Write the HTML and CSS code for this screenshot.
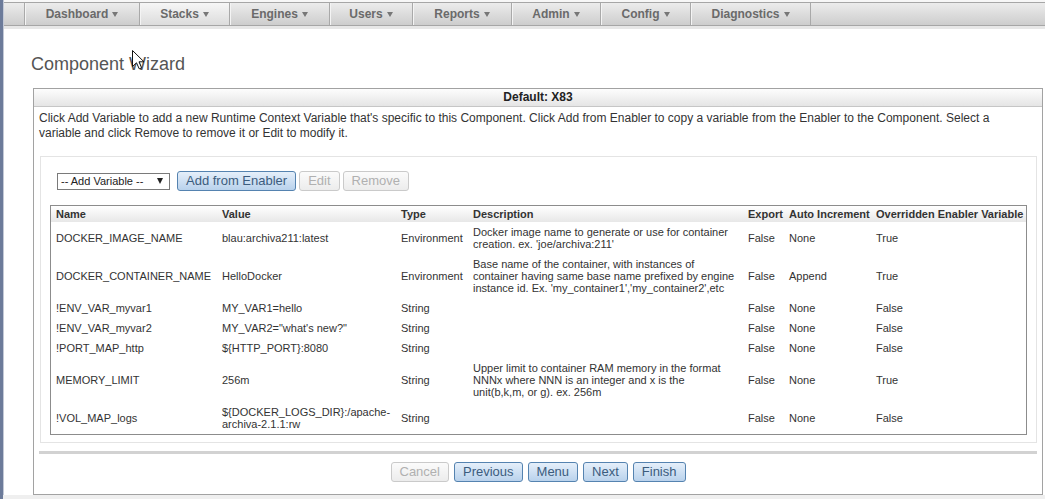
FILE: index.html
```html
<!DOCTYPE html>
<html lang="en">
<head>
<meta charset="utf-8">
<title>Component Wizard</title>
<link rel="stylesheet" href="styles.css">
</head>
<body>
<div class="frame">
  <div class="page">
    <div class="navwrap">
      <nav class="nav">
        <a class="nav-item i-dash">Dashboard<span class="dd"></span></a>
        <a class="nav-item i-stacks active">Stacks<span class="dd"></span></a>
        <a class="nav-item i-engines">Engines<span class="dd"></span></a>
        <a class="nav-item i-users">Users<span class="dd"></span></a>
        <a class="nav-item i-reports">Reports<span class="dd"></span></a>
        <a class="nav-item i-admin">Admin<span class="dd"></span></a>
        <a class="nav-item i-config">Config<span class="dd"></span></a>
        <a class="nav-item i-diag">Diagnostics<span class="dd"></span></a>
      </nav>
    </div>

    <h1 class="title">Component Wizard</h1>

    <section class="panel">
      <div class="panel-head">Default: X83</div>
      <div class="panel-body">
        <p class="desc">Click Add Variable to add a new Runtime Context Variable that's specific to this Component. Click Add from Enabler to copy a variable from the Enabler to the Component. Select a variable and click Remove to remove it or Edit to modify it.</p>

        <div class="box">
          <div class="controls">
            <div class="select"><span>-- Add Variable --</span><span class="sel-caret"></span></div>
            <button class="btn">Add from Enabler</button>
            <button class="btn" disabled>Edit</button>
            <button class="btn" disabled>Remove</button>
          </div>

          <table class="vars">
            <colgroup>
              <col class="c-name">
              <col class="c-value">
              <col class="c-type">
              <col class="c-desc">
              <col class="c-export">
              <col class="c-auto">
              <col class="c-over">
            </colgroup>
            <thead>
              <tr>
                <th>Name</th>
                <th>Value</th>
                <th>Type</th>
                <th>Description</th>
                <th>Export</th>
                <th>Auto Increment</th>
                <th>Overridden Enabler Variable</th>
              </tr>
            </thead>
            <tbody>
              <tr>
                <td>DOCKER_IMAGE_NAME</td>
                <td>blau:archiva211:latest</td>
                <td>Environment</td>
                <td>Docker image name to generate or use for container<br>creation. ex. 'joe/archiva:211'</td>
                <td>False</td>
                <td>None</td>
                <td>True</td>
              </tr>
              <tr>
                <td>DOCKER_CONTAINER_NAME</td>
                <td>HelloDocker</td>
                <td>Environment</td>
                <td>Base name of the container, with instances of<br>container having same base name prefixed by engine<br>instance id. Ex. 'my_container1','my_container2',etc</td>
                <td>False</td>
                <td>Append</td>
                <td>True</td>
              </tr>
              <tr>
                <td>!ENV_VAR_myvar1</td>
                <td>MY_VAR1=hello</td>
                <td>String</td>
                <td></td>
                <td>False</td>
                <td>None</td>
                <td>False</td>
              </tr>
              <tr>
                <td>!ENV_VAR_myvar2</td>
                <td>MY_VAR2="what's new?"</td>
                <td>String</td>
                <td></td>
                <td>False</td>
                <td>None</td>
                <td>False</td>
              </tr>
              <tr>
                <td>!PORT_MAP_http</td>
                <td>${HTTP_PORT}:8080</td>
                <td>String</td>
                <td></td>
                <td>False</td>
                <td>None</td>
                <td>False</td>
              </tr>
              <tr>
                <td>MEMORY_LIMIT</td>
                <td>256m</td>
                <td>String</td>
                <td>Upper limit to container RAM memory in the format<br>NNNx where NNN is an integer and x is the<br>unit(b,k,m, or g). ex. 256m</td>
                <td>False</td>
                <td>None</td>
                <td>True</td>
              </tr>
              <tr>
                <td>!VOL_MAP_logs</td>
                <td>${DOCKER_LOGS_DIR}:/apache-<br>archiva-2.1.1:rw</td>
                <td>String</td>
                <td></td>
                <td>False</td>
                <td>None</td>
                <td>False</td>
              </tr>
            </tbody>
          </table>
        </div>

        <div class="sep"></div>

        <div class="actions">
          <button class="btn" disabled>Cancel</button>
          <button class="btn">Previous</button>
          <button class="btn">Menu</button>
          <button class="btn">Next</button>
          <button class="btn">Finish</button>
        </div>
      </div>
    </section>
  </div>

  <svg class="cursor" width="13" height="20" viewBox="0 0 13 20" aria-hidden="true">
    <path d="M0.5 0.5 L0.5 16.5 L4.5 12.8 L7.2 18.8 L9.6 17.8 L7 11.8 L12 11.8 Z" fill="#ffffff" stroke="#111111" stroke-width="1" stroke-linejoin="miter"/>
  </svg>
</div>
</body>
</html>
```

FILE: styles.css
```css
html, body {
  margin: 0;
  padding: 0;
}

body {
  font-family: "Liberation Sans", Arial, sans-serif;
  background: #efefef;
  color: #333;
}

.frame {
  position: relative;
  min-height: 499px;
  box-sizing: border-box;
  border-left: 3px solid #6c7b9a;
}

.page {
  background: #ffffff;
  border-left: 1px solid #c3c9d6;
}

/* ---------- top navigation ---------- */
.navwrap {
  padding-top: 2px;
  background: #f7f7f7;
  border-bottom: 3px solid #e7e7e7;
}

.nav {
  display: flex;
  height: 22px;
  padding-left: 20px;
  border-top: 1px solid #a6a6a6;
  border-bottom: 1px solid #a6a6a6;
  background: linear-gradient(#ececec, #cdcdcd);
}

.nav-item {
  box-sizing: border-box;
  display: block;
  height: 22px;
  border-left: 1px solid #a9a9a9;
  box-shadow: inset 1px 0 0 #f4f4f4;
  text-align: center;
  font-size: 12px;
  font-weight: bold;
  line-height: 22px;
  color: #6a6a6a;
  text-decoration: none;
  white-space: nowrap;
}

.nav-item.active {
  background: linear-gradient(#f6f6f6, #dcdcdc);
}

.dd {
  display: inline-block;
  width: 0;
  height: 0;
  margin-left: 4px;
  vertical-align: 1px;
  border-left: 3.5px solid transparent;
  border-right: 3.5px solid transparent;
  border-top: 5px solid #777;
}

.i-dash { width: 115px; }
.i-stacks { width: 90px; }
.i-engines { width: 100px; }
.i-users { width: 83px; }
.i-reports { width: 99px; }
.i-admin { width: 89px; }
.i-config { width: 90px; }
.i-diag { width: 121px; border-right: 1px solid #a9a9a9; }

/* ---------- title ---------- */
.title {
  margin: 25px 0 0 27px;
  font-size: 18px;
  line-height: 21px;
  font-weight: normal;
  color: #555;
}

/* ---------- panel ---------- */
.panel {
  margin: 13px 2px 0 29px;
  border: 1px solid #a2a2a2;
  background: #fff;
}

.panel-head {
  height: 17px;
  line-height: 17px;
  text-align: center;
  font-size: 12px;
  font-weight: bold;
  color: #222;
  background: linear-gradient(#fdfdfd, #e5e5e5);
  border-bottom: 1px solid #c6c6c6;
}

.panel-body {
  padding: 0 5px 12px;
}

.desc {
  margin: 0;
  padding: 4px 40px 0 0;
  font-size: 12px;
  line-height: 15px;
  color: #333;
}

.box {
  margin: 15px 0 0 1px;
  padding: 14px 9px 7px;
  border: 1px solid #e4e4e4;
}

.controls {
  display: flex;
  align-items: center;
  height: 20px;
  margin-left: 7px;
}

.select {
  box-sizing: border-box;
  width: 113px;
  height: 17px;
  margin-right: 7px;
  padding: 0 6px 0 3px;
  display: flex;
  align-items: center;
  justify-content: space-between;
  border: 1px solid #7a7a7a;
  background: #fff;
  font-size: 11px;
  color: #222;
}

.sel-caret {
  width: 0;
  height: 0;
  border-left: 3.5px solid transparent;
  border-right: 3.5px solid transparent;
  border-top: 6px solid #222;
}

.controls .btn {
  margin-right: 3px;
}

/* ---------- buttons ---------- */
.btn {
  box-sizing: border-box;
  height: 20px;
  padding: 0 8px;
  font-family: "Liberation Sans", Arial, sans-serif;
  font-size: 13px;
  line-height: 18px;
  color: #3b5c7e;
  border: 1px solid #5583b0;
  border-radius: 3px;
  background: linear-gradient(#e5effa, #b9d2ec);
}

.btn:disabled {
  color: #b0b0b0;
  border-color: #cacaca;
  background: linear-gradient(#fbfbfb, #ececec);
}

/* ---------- table ---------- */
.vars {
  width: 100%;
  margin-top: 14px;
  table-layout: fixed;
  border-collapse: separate;
  border-spacing: 0;
  border: 1px solid #8c8c8c;
  font-size: 11px;
}

.c-name { width: 166px; }
.c-value { width: 179px; }
.c-type { width: 72px; }
.c-desc { width: 275px; }
.c-export { width: 41px; }
.c-auto { width: 87px; }
.c-over { width: 155px; }

.vars th {
  padding: 2px 5px;
  text-align: left;
  font-weight: bold;
  line-height: 12px;
  color: #333;
  white-space: nowrap;
  background: linear-gradient(#ffffff, #e7e7e7);
}

.vars td {
  padding: 4px 5px;
  line-height: 12px;
  color: #333;
  vertical-align: middle;
}

/* ---------- footer ---------- */
.sep {
  height: 3px;
  margin-top: 8px;
  background: #d2d2d2;
}

.actions {
  display: flex;
  justify-content: center;
  gap: 5px;
  margin-top: 8px;
}

/* ---------- mouse pointer overlay ---------- */
.cursor {
  position: absolute;
  left: 129px;
  top: 50px;
}
```
